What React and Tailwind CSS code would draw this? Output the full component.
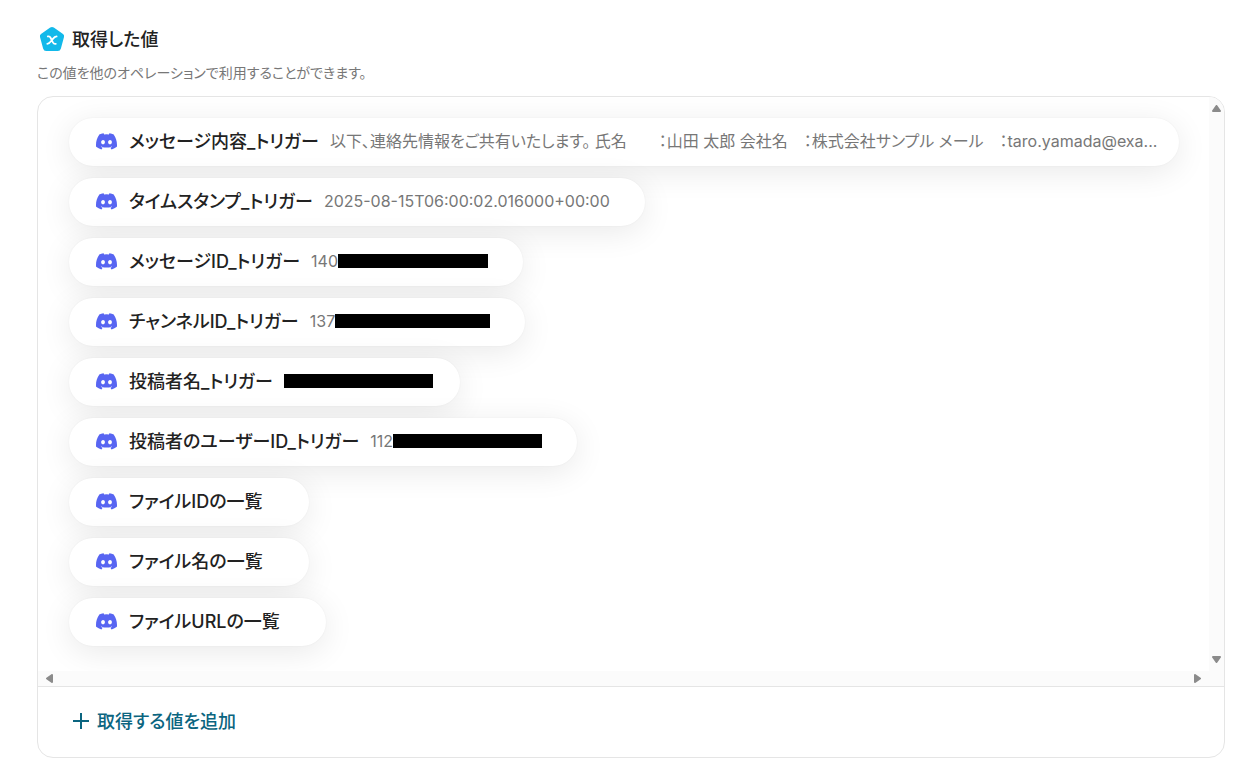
import React from "react";

const redactionWidths = {
  short: "w-[149px]",
  medium: "w-[150px]",
  long: "w-[155px]",
};

const values = [
  {
    name: "メッセージ内容_トリガー",
    sample:
      "以下、連絡先情報をご共有いたします。 氏名\u3000\u3000：山田 太郎 会社名\u3000：株式会社サンプル メール\u3000：taro.yamada@exa...",
  },
  { name: "タイムスタンプ_トリガー", sample: "2025-08-15T06:00:02.016000+00:00" },
  { name: "メッセージID_トリガー", sample: "140", redacted: "medium" },
  { name: "チャンネルID_トリガー", sample: "137", redacted: "long" },
  { name: "投稿者名_トリガー", sample: "", redacted: "short", compact: true },
  { name: "投稿者のユーザーID_トリガー", sample: "112", redacted: "short" },
  { name: "ファイルIDの一覧", sample: "" },
  { name: "ファイル名の一覧", sample: "" },
  { name: "ファイルURLの一覧", sample: "" },
];

function ValueIcon() {
  return (
    <svg viewBox="0 0 26 26" className="size-[26px] shrink-0" aria-hidden="true">
      <path
        d="M11.2 1.5 Q13 .3 14.8 1.5 L24 8 Q25.5 9.2 25 11 L21.9 22.4 Q21.2 24.9 18.8 24.9 H7.2 Q4.8 24.9 4.1 22.4 L1 11 Q.5 9.2 2 8 Z"
        fill="#12b9ea"
      />
      <path
        d="M8.8 10.4 H9.6 C10.8 10.4 11.2 11 11.7 12 L13.9 16.4 C14.4 17.3 14.8 17.8 16 17.8 H16.8 M17.6 10.4 C15.6 10.4 14.6 11.9 13 13.9 C11.3 16.1 10.3 17.8 8.3 17.8"
        fill="none"
        stroke="#fff"
        strokeWidth="1.8"
        strokeLinecap="round"
      />
    </svg>
  );
}

function DiscordIcon() {
  return (
    <svg viewBox="0 1.4 24 20.4" className="h-[18px] w-[21px] shrink-0" preserveAspectRatio="none" aria-hidden="true">
      <path
        fill="#5865f2"
        d="M20.317 4.37a19.79 19.79 0 0 0-4.885-1.515.074.074 0 0 0-.079.037c-.21.375-.444.864-.608 1.25a18.27 18.27 0 0 0-5.487 0 12.64 12.64 0 0 0-.617-1.25.077.077 0 0 0-.079-.037A19.736 19.736 0 0 0 3.677 4.37a.07.07 0 0 0-.032.027C.533 9.046-.32 13.58.099 18.057a.082.082 0 0 0 .031.057 19.9 19.9 0 0 0 5.993 3.03.078.078 0 0 0 .084-.028c.462-.63.874-1.295 1.226-1.994a.076.076 0 0 0-.041-.106 13.107 13.107 0 0 1-1.872-.892.077.077 0 0 1-.008-.128c.126-.094.252-.192.372-.291a.074.074 0 0 1 .077-.01c3.928 1.793 8.18 1.793 12.062 0a.074.074 0 0 1 .078.009c.12.099.246.198.373.292a.077.077 0 0 1-.006.127 12.299 12.299 0 0 1-1.873.892.077.077 0 0 0-.041.107c.36.698.772 1.362 1.225 1.993a.076.076 0 0 0 .084.028 19.839 19.839 0 0 0 6.002-3.03.077.077 0 0 0 .032-.054c.5-5.177-.838-9.674-3.549-13.66a.061.061 0 0 0-.031-.03zM8.02 15.33c-1.183 0-2.157-1.085-2.157-2.419 0-1.333.956-2.419 2.157-2.419 1.21 0 2.176 1.096 2.157 2.42 0 1.333-.956 2.418-2.157 2.418zm7.975 0c-1.183 0-2.157-1.085-2.157-2.419 0-1.333.955-2.419 2.157-2.419 1.21 0 2.176 1.096 2.157 2.42 0 1.333-.946 2.418-2.157 2.418z"
      />
    </svg>
  );
}

const arrows = {
  up: { box: "h-[7px] w-[9px]", view: "0 0 9 7", d: "M4.5 1 8 6H1Z" },
  down: { box: "h-[7px] w-[9px]", view: "0 0 9 7", d: "M1 1H8L4.5 6Z" },
  left: { box: "h-[9px] w-[7px]", view: "0 0 7 9", d: "M6 1V8L1 4.5Z" },
  right: { box: "h-[9px] w-[7px]", view: "0 0 7 9", d: "M1 1 6 4.5 1 8Z" },
};

function ScrollArrow({ direction, label }) {
  const arrow = arrows[direction];
  return (
    <button type="button" aria-label={label} className="flex size-[15px] items-center justify-center">
      <svg viewBox={arrow.view} className={arrow.box} aria-hidden="true">
        <path d={arrow.d} fill="#8b8b8b" stroke="#8b8b8b" strokeWidth="2" strokeLinejoin="round" />
      </svg>
    </button>
  );
}

function ValuePill({ value }) {
  return (
    <li
      className={`flex h-12 max-w-full items-center rounded-full bg-white pb-[2px] pl-[27px] whitespace-nowrap shadow-[0_6px_32px_rgba(0,0,0,0.09),0_0_2px_rgba(0,0,0,0.05)] ${
        value.compact ? "pr-[27px]" : "pr-[35px]"
      }`}
    >
      <DiscordIcon />
      <span className="ml-3 text-[18px] font-medium text-[#222]">{value.name}</span>
      <span className="ml-[11px] flex min-w-0 items-center text-[16px] text-[#777]">
        {value.sample}
        {value.redacted && <span className={`h-[14px] bg-black ${redactionWidths[value.redacted]}`} />}
      </span>
    </li>
  );
}

export default function App() {
  return (
    <main className="bg-white pt-[26px] pr-8 pb-[26px] pl-[37px] font-[Inter,'Noto_Sans_CJK_JP',sans-serif] text-[#222] [font-feature-settings:'palt']">
      <header>
        <h1 className="flex h-[26px] items-center gap-[7px] pl-[2px] text-[18px] font-medium">
          <ValueIcon />
          取得した値
        </h1>
        <p className="mt-[10px] text-[14px] leading-[22px] text-[#777]">
          この値を他のオペレーションで利用することができます。
        </p>
      </header>

      <section className="mt-3 overflow-hidden rounded-2xl border border-[#e5e5e5]">
        <div className="grid grid-cols-[minmax(0,1fr)_15px] border-b border-[#e5e5e5]">
          <ul className="flex flex-col items-start gap-3 overflow-hidden pt-[21px] pr-[30px] pb-[25px] pl-[31px]">
            {values.map((value) => (
              <ValuePill key={value.name} value={value} />
            ))}
          </ul>
          <div className="flex flex-col justify-between bg-[#fbfbfb] pt-1 pb-1">
            <ScrollArrow direction="up" label="上へスクロール" />
            <ScrollArrow direction="down" label="下へスクロール" />
          </div>
          <div className="flex justify-between bg-[#fbfbfb] px-1">
            <ScrollArrow direction="left" label="左へスクロール" />
            <ScrollArrow direction="right" label="右へスクロール" />
          </div>
          <div className="bg-[#fbfbfb]" />
        </div>
        <div className="flex h-[70px] items-center pb-[2px] pl-[35px]">
          <button type="button" className="flex items-center gap-2 text-[18px] font-medium text-[#0b6580]">
            <svg viewBox="0 0 16 16" className="size-4" aria-hidden="true">
              <path d="M8 0V16M0 8H16" stroke="currentColor" strokeWidth="2" />
            </svg>
            取得する値を追加
          </button>
        </div>
      </section>
    </main>
  );
}
